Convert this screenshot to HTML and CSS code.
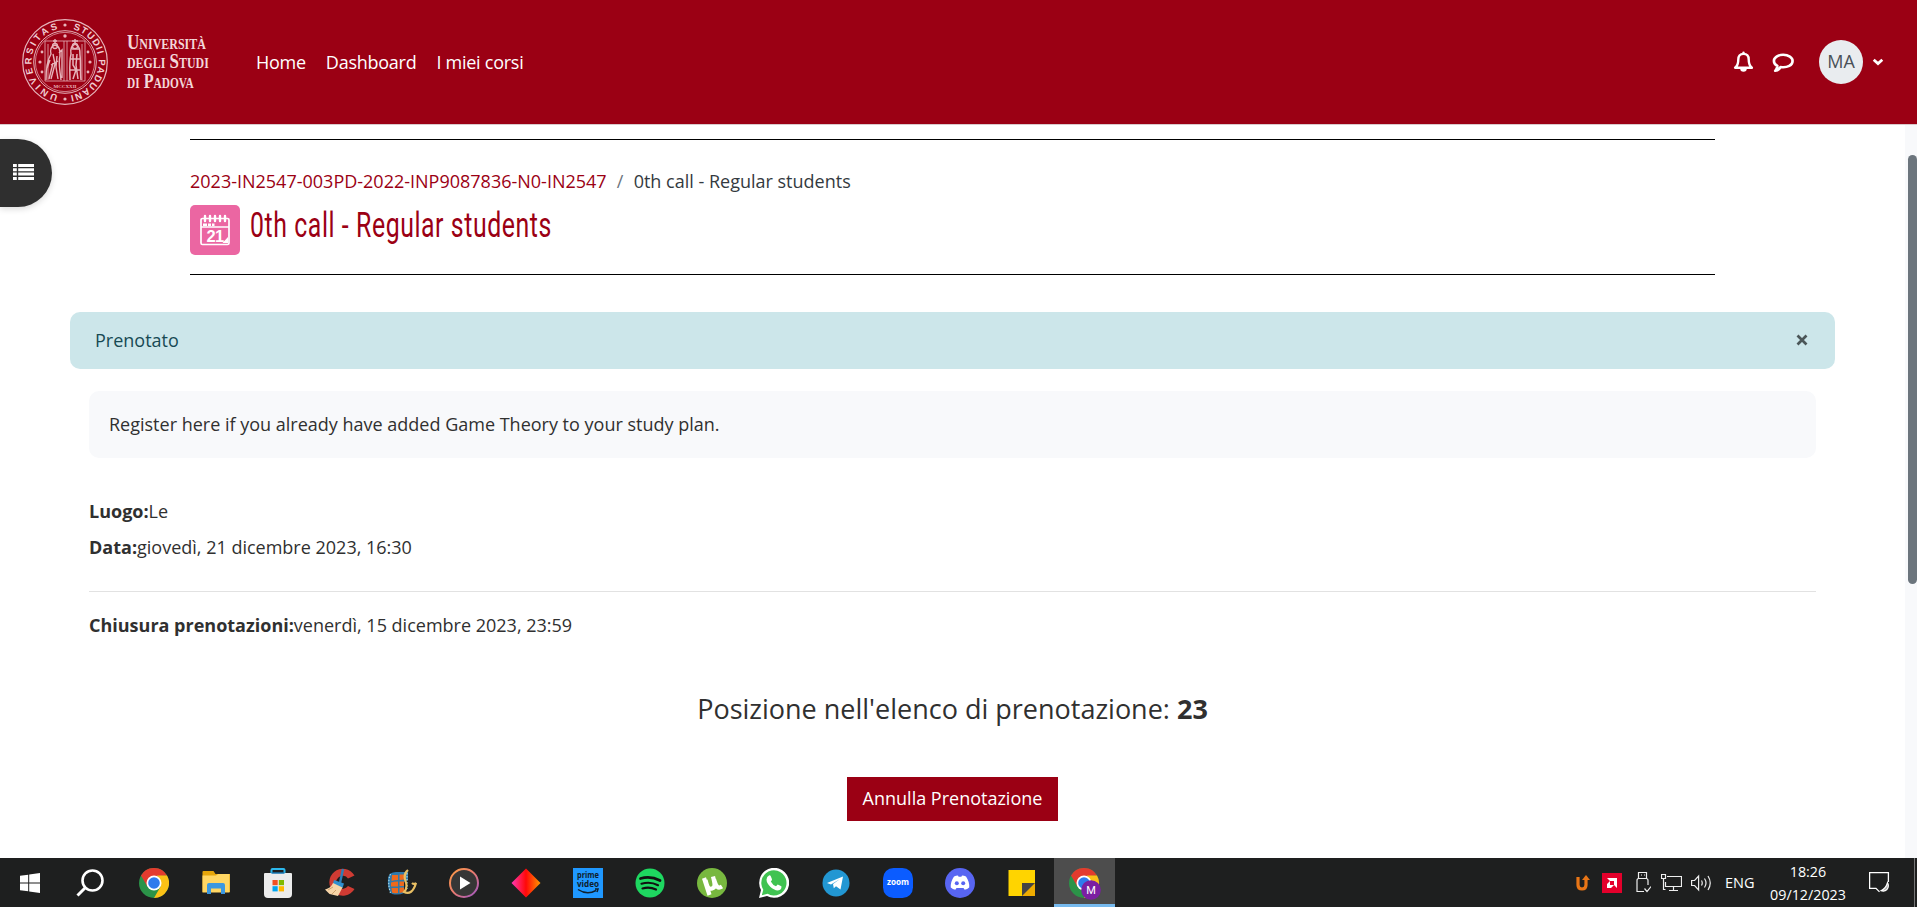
FILE: index.html
```html
<!DOCTYPE html>
<html lang="it">
<head>
<meta charset="utf-8">
<title>0th call - Regular students</title>
<link rel="stylesheet" href="styles.css">
</head>
<body>
<header class="topbar">
  <svg class="seal" width="88" height="88" viewBox="-44 -44 88 88">
    <defs><path id="ring" d="M0 33.6A33.6 33.6 0 1 1 .1 33.6"/></defs>
    <g fill="none" stroke="#e6b3ba">
      <circle r="42.3" stroke-width="1.2"/><circle r="31.3" stroke-width="1"/><circle r="29.6" stroke-width=".7"/>
      <path d="M-20 19V-21H20V19M-17 18V-18M17 18V-18M-20 19H20M-1 19V-21M2 19V-21" stroke-width=".8"/>
      <path d="M-10-23v5M-12-21h4M-10-17c-4 1-5 5-4 9-3 5-5 13-5 26M-10-17c5 1 5 6 5 11-2 7 0 14 1 24M-12-8l2 10-4 15M-8-6l-1 11 2 12M-15-2l-3 8M-12 1l-4 16M-6-9l3-3v28M-14 3l7-4" stroke-width="1.4"/>
      <path d="M10-23v5M7-21h6M10-18c-4 2-5 5-4 10-2 9-1 18-1 26M10-18c5 2 5 6 5 11 1 8 0 17 1 25M8-8v11l3 5-3 9M12-8l-1 11 2 14M7-13h7M6-3h9M5 8h10" stroke-width="1.5"/>
      <circle cx="-10" cy="-16" r="2.5" stroke-width="1.3"/><circle cx="10" cy="-16" r="2.6" stroke-width="1.3"/>
    </g>
    <g fill="#e6b3ba"><circle cy="-37" r="1.6"/><circle cy="37" r="1.6"/><circle cy="-26" r="1.7"/><circle cx="-25" r="1.6"/><circle cx="25" r="1.6"/><circle cx="-23" cy="-10" r="1.4"/><circle cx="23" cy="-10" r="1.4"/><circle cx="-23" cy="10" r="1.4"/><circle cx="23" cy="10" r="1.4"/></g>
    <text class="seal-year" x="0" y="25.5" text-anchor="middle">MCCXXII</text>
    <text class="seal-text"><textPath href="#ring" startOffset="7" textLength="91">UNIVERSITAS</textPath></text>
    <text class="seal-text"><textPath href="#ring" startOffset="113" textLength="92">STUDII PADUANI</textPath></text>
  </svg>
  <div class="wordmark"><span class="wm1">Università</span><span class="wm2">degli Studi</span><span class="wm3">di Padova</span></div>
  <nav class="nav"><a>Home</a><a>Dashboard</a><a>I miei corsi</a></nav>
  <div class="user">
    <svg class="bell" width="21" height="22" viewBox="0 0 21 22"><path d="M10.500 2.900c-3.700 0-5.200 2.700-5.200 5.600 0 4.300-1.200 6.700-3.200 8.300h16.800c-2-1.600-3.200-4-3.200-8.300 0-2.900-1.500-5.600-5.200-5.600z" fill="none" stroke="#fff" stroke-width="2.400" stroke-linejoin="round"/><path d="M9.300 3V1.600a1.200 1.200 0 0 1 2.400 0V3zM7.200 17.500h6.600a3.300 3.300 0 0 1-6.600 0z" fill="#fff"/></svg>
    <svg class="chat" width="22" height="20" viewBox="0 0 22 20"><path d="M11.200 1.800C6 1.800 1.900 4.400 1.900 7.900c0 2.200 1.400 3.900 3.500 5-.2 1.900-1 3.700-2.200 4.900 2.400-.2 4.200-1.700 5.400-3.800 7 1 12-2 12-6.100 0-3.500-4.200-6.100-9.400-6.100z" fill="none" stroke="#fff" stroke-width="2.600" stroke-linejoin="round"/></svg>
    <span class="avatar">MA</span>
    <svg class="chev" width="12" height="8" viewBox="0 0 12 8"><path d="M1.700 1.700 6 5.600l4.300-3.900" fill="none" stroke="#fff" stroke-width="2.700"/></svg>
  </div>
</header>
<div class="body">
  <aside class="left"><button class="drawer"><svg width="22" height="16" viewBox="0 0 22 16"><path d="M0 0h3.800v2.900H0zM5.200 0H21v2.900H5.200zM0 4.300h3.800v2.900H0zM5.200 4.300H21v2.900H5.200zM0 8.600h3.800v2.900H0zM5.200 8.600H21v2.900H5.200zM0 12.900h3.800V16H0zM5.200 12.900H21V16H5.200z" fill="#fff"/></svg></button></aside>
  <main class="main">
    <section class="head">
      <div class="crumbs"><a>2023-IN2547-003PD-2022-INP9087836-N0-IN2547</a><i>/</i><span>0th call - Regular students</span></div>
      <div class="titlerow">
        <span class="modicon"><svg width="30" height="32" viewBox="0 0 30 32"><path d="M2.500 4.500h25A1.500 1.500 0 0 1 29 6v23a1.500 1.500 0 0 1-1.500 1.500h-25A1.500 1.500 0 0 1 1 29V6a1.500 1.500 0 0 1 1.500-1.500z" fill="none" stroke="#fff" stroke-width="1.700"/><path d="M1 13h28" stroke="#fff" stroke-width="1.500"/><path d="M5 2v5M10 2v5M15 2v5M20 2v5M25 2v5" stroke="#fff" stroke-width="2.400" stroke-linecap="round"/><path d="M3 9.500h4V12H3zM8 9.500h3V12H8zM12 9.500h2.500V12H12zM22.500 29 28 23v6z" fill="#fff"/><text class="cal" x="15" y="27.500" text-anchor="middle">21</text></svg></span>
        <h1>0th call - Regular students</h1>
      </div>
    </section>
    <div class="alert"><span>Prenotato</span><svg width="12" height="12" viewBox="0 0 12 12"><path d="m1.500 1.500 9 9m0-9-9 9" stroke="#4b5658" stroke-width="2.700"/></svg></div>
    <section class="content">
      <div class="intro">Register here if you already have added Game Theory to your study plan.</div>
      <p class="line"><b>Luogo:</b>Le</p>
      <p class="line"><b>Data:</b>giovedì, 21 dicembre 2023, 16:30</p>
      <hr>
      <p class="line"><b>Chiusura prenotazioni:</b>venerdì, 15 dicembre 2023, 23:59</p>
      <p class="position">Posizione nell'elenco di prenotazione: <b>23</b></p>
      <button class="cancel">Annulla Prenotazione</button>
    </section>
  </main>
  <div class="scroll"><div class="thumb"></div></div>
</div>
<footer class="taskbar">
  <svg class="start" width="20" height="20" viewBox="0 0 20 20"><path d="M0 2.800 8.200 1.700v7.800H0zM9.200 1.500 20 0v9.500H9.200zM0 10.500h8.200v7.800L0 17.200zM9.200 10.500H20V20L9.200 18.500z" fill="#fff"/></svg>
  <svg class="find" width="28" height="28" viewBox="0 0 28 28"><circle cx="16.500" cy="11.500" r="10" fill="none" stroke="#fff" stroke-width="2.600"/><path d="m9.500 18.500-8 8" stroke="#fff" stroke-width="3"/></svg>
  <div class="apps">
    <span class="app"><svg width="30" height="30" viewBox="0 0 30 30"><circle cx="15" cy="15" r="15" fill="#2b9348"/><path d="M2 7.500A15 15 0 0 1 28 7.500L15 8.500 8.500 18.700z" fill="#e33b2e"/><path d="M28 7.500A15 15 0 0 1 15 30L21.500 18.700 18 7.500z" fill="#fbc116"/><circle cx="15" cy="15" r="7.500" fill="#fff"/><circle cx="15" cy="15" r="5.800" fill="#2f7bec"/></svg></span>
    <span class="app"><svg width="30" height="30" viewBox="0 0 30 30"><path d="M1.500 4q0-1 1-1h10l2 3H29v18H1.500z" fill="#e5a50a"/><path d="M1.500 7.500H15L17 6h11.500v18.500h-27z" fill="#ffd663"/><path d="M6 26V17q0-2 2-2h14q2 0 2 2v9h-4v-5.500H10V26z" fill="#3c98e0"/></svg></span>
    <span class="app"><svg width="30" height="30" viewBox="0 0 30 30"><path d="M8.500 7V2q0-1 1-1h11q1 0 1 1v5" fill="none" stroke="#2cb8ec" stroke-width="2"/><path d="M1 6q0-1 1-1h26q1 0 1 1v20q0 4-4 4H5q-4 0-4-4z" fill="#ececec"/><path d="M8.500 5h13" stroke="#1679b5" stroke-width="1.500"/><path d="M9.500 12h5.200v5.200H9.500z" fill="#f25022"/><path d="M15.800 12H21v5.200h-5.200z" fill="#7fba00"/><path d="M9.500 18.200h5.200v5.200H9.500z" fill="#00a4ef"/><path d="M15.800 18.200H21v5.200h-5.200z" fill="#ffb900"/></svg></span>
    <span class="app"><svg width="30" height="30" viewBox="0 0 30 30"><path d="M29.500 7.500A13.500 13.500 0 1 0 29.500 21L23 18a6.500 6.500 0 1 1 0-7.500z" fill="#cf3b33"/><path d="m18 1-3 14" stroke="#2c7fb8" stroke-width="2.400"/><path d="m9 12 10 3.500-1.500 4.500L8 15.500z" fill="#2f8fd0"/><path d="m8 15 9.500 4.500L13 28 4.500 26 0 21.500Q6 20 8 15z" fill="#f7d5a8"/><path d="m3 22 5-3m-1 7 4-4" stroke="#cda36e"/></svg></span>
    <span class="app"><svg width="30" height="30" viewBox="0 0 30 30"><path d="M1 10Q2 4 9 4h12v8l-4 2v11q-5 2.500-12 1-5-4-4-16z" fill="#2e79ab"/><path d="M5 7h6v5q-4 0-6.500 1zM12.500 6.500H18v5q-3 0-5.500.5zM4 14.500q3-1 7-1v5H4zM12.500 13.500H17V18h-4.500zM4.500 20H11v5q-4 .5-6-.5zM12.500 19.500H17V24l-4.500 1z" fill="#ee691c"/><path d="M3.500 6Q0 14 3.500 25M20 5v16" fill="none" stroke="#a7d8e8" stroke-width="1.200" stroke-dasharray="1.500 1.500"/><path d="M21 2q-5 4-2.500 11T17 24q8 4 12-9-2 2-4 0" fill="none" stroke="#e8bf64" stroke-width="2.200"/></svg></span>
    <span class="app"><svg width="30" height="30" viewBox="0 0 30 30"><defs><linearGradient id="mp" x1="0" y1="0" x2="1" y2="1"><stop stop-color="#ff9d43"/><stop offset=".5" stop-color="#e77972"/><stop offset="1" stop-color="#9a55c9"/></linearGradient></defs><circle cx="15" cy="15" r="14" fill="#363636" stroke="url(#mp)" stroke-width="2"/><path d="m11 8.500 10.500 6.500L11 21.500z" fill="#fff"/></svg></span>
    <span class="app"><svg width="30" height="30" viewBox="0 0 30 30"><defs><linearGradient id="dm"><stop stop-color="#ff38b5"/><stop offset=".5" stop-color="#ff0808"/><stop offset="1" stop-color="#ff9800"/></linearGradient></defs><path d="M15 .5 29.500 15 15 29.500.5 15z" fill="url(#dm)"/></svg></span>
    <span class="app"><svg width="30" height="30" viewBox="0 0 30 30"><path d="M0 0h30v30H0z" fill="#1f98ff"/><text class="prime" x="15" y="10" text-anchor="middle" textLength="22" lengthAdjust="spacingAndGlyphs">prime</text><text class="prime" x="15" y="18.500" text-anchor="middle" textLength="22" lengthAdjust="spacingAndGlyphs">video</text><path d="M5 21.500q9 6 18 1M22 21h3l-1 3" fill="none" stroke="#10202c" stroke-width="1.500"/></svg></span>
    <span class="app"><svg width="30" height="30" viewBox="0 0 30 30"><circle cx="15" cy="15" r="14.500" fill="#1ed760"/><path d="M5.500 10.500q10-3 19.500 2" stroke-width="2.800" fill="none" stroke="#111" stroke-linecap="round"/><path d="M6.500 15.700q9-2.500 16.500 1.500M7.500 20.500q7-2 13.500 1" stroke-width="2.200" fill="none" stroke="#111" stroke-linecap="round"/></svg></span>
    <span class="app"><svg width="30" height="30" viewBox="0 0 30 30"><circle cx="15" cy="15" r="15" fill="#78b83f"/><path d="m7 10 5.500 17M8.500 12c2 8 3 9.500 6.500 8.500s3-4 1-12m1 3c2.500 8 4 9.500 8 7" fill="none" stroke="#fff" stroke-width="4.200"/></svg></span>
    <span class="app"><svg width="30" height="30" viewBox="0 0 30 30"><path d="m0 30 2-8A15 15 0 1 1 8 28z" fill="#fff"/><path d="m2.800 27.300 1.500-5.600a12.600 12.600 0 1 1 4.300 4.100z" fill="#40c351"/><path d="M10 7.500q1.200-.5 1.800.7l1.200 3q.3.700-1.200 2.200 2 3.700 5.200 4.800l1.700-1.800 3.700 1.800q.5 3.800-3.600 4.300c-5-.3-11.300-6-11.300-11q.3-3.200 2.500-4z" fill="#fff"/></svg></span>
    <span class="app"><svg width="30" height="30" viewBox="0 0 30 30"><circle cx="15" cy="15" r="13.500" fill="#2297d3"/><path d="m6 15 16-6.500-2.500 13-4.500-3.300-2.200 2.100-.8-4.200 7-5-9 5.500z" fill="#fff"/></svg></span>
    <span class="app"><svg width="30" height="30" viewBox="0 0 30 30"><rect width="30" height="30" rx="10.500" fill="#0b5cff"/><text class="zoomtext" x="15" y="17.300" text-anchor="middle" textLength="22" lengthAdjust="spacingAndGlyphs">zoom</text></svg></span>
    <span class="app"><svg width="30" height="30" viewBox="0 0 30 30"><circle cx="15" cy="15" r="15" fill="#5865f2"/><path d="M9 8.500q2-1 4-1l.6 1.300h2.800L17 7.500q2 0 4 1 3.700 5.500 3.200 11-2 1.700-4.500 2.200L18.500 20h-7l-1.200 1.700q-2.500-.5-4.500-2.200Q5.300 14 9 8.500z" fill="#fff"/><circle cx="11.800" cy="15.300" r="2" fill="#5865f2"/><circle cx="18.200" cy="15.300" r="2" fill="#5865f2"/></svg></span>
    <span class="app"><svg width="30" height="30" viewBox="0 0 30 30"><path d="M1.500 2H28v26H1.500z" fill="#ffd400"/><path d="M15 15h13v13H15z" fill="#eeac00"/><path d="M15 15h13L15 28z" fill="#444"/></svg></span>
    <span class="app active"><svg width="34" height="32" viewBox="-1 0 34 32"><circle cx="15" cy="15" r="15" fill="#2b9348"/><path d="M2 7.500A15 15 0 0 1 28 7.500L15 8.500 8.500 18.700z" fill="#e33b2e"/><path d="M28 7.500A15 15 0 0 1 15 30L21.500 18.700 18 7.500z" fill="#fbc116"/><circle cx="15" cy="15" r="7.500" fill="#fff"/><circle cx="15" cy="15" r="5.800" fill="#2f7bec"/><circle cx="22" cy="22" r="9.800" fill="#7b1fa2"/><text class="profile" x="22" y="26" text-anchor="middle">M</text></svg></span>
  </div>
  <div class="tray">
    <svg class="t1" width="14" height="16" viewBox="0 0 14 16"><path d="M2 2v8q0 4 4 4t4-4V3" fill="none" stroke="#e87516" stroke-width="3.200"/><path d="m6 5 4-5 4 5z" fill="#e87516"/></svg>
    <svg class="t2" width="20" height="20" viewBox="0 0 20 20"><path d="M0 0h20v20H0z" fill="#e4002b"/><path d="M5 5h10v10l-3-3V8H8zM5 15v-4l3-3v4h4l-3 3z" fill="#fff"/></svg>
    <svg class="t3" width="15" height="21" viewBox="0 0 15 21"><path d="M2.500 6.500v-6h8v6M1 20V8.500q0-2 2-2h7q2 0 2 2V13M1 19.500h7M8.500 16.500l2.500 3 4-5M5 3h1m2 0h1" fill="none" stroke="#eee" stroke-width="1.200"/></svg>
    <svg class="t4" width="21" height="18" viewBox="0 0 21 18"><path d="M6 2.500h14.500v10H4.500V8M12.500 12.500v4M8 16.500h9M.5.500h4v4H.5zM2.500 4.500v11h2" fill="none" stroke="#eee" stroke-width="1.200"/></svg>
    <svg class="t5" width="21" height="18" viewBox="0 0 21 18"><path d="M.6 6.500h3l4-4.500v14l-4-4.500h-3zM10.500 6.500q1.500 2.500 0 5M13.500 4.500q3 4.500 0 9M17 2q4.500 7 0 14" fill="none" stroke="#eee" stroke-width="1.200"/></svg>
    <span class="lang">ENG</span>
    <span class="clock"><span>18:26</span><span>09/12/2023</span></span>
    <svg class="t6" width="21" height="21" viewBox="0 0 21 21"><path d="M19.400 10V.6H.6v15.800H7l3.500 3.500" fill="none" stroke="#fff" stroke-width="1.300"/><path d="M18.500 10.500q2 4-.5 7-2.500 2.500-6 1.200 5-2.200 6.500-8.200z" fill="#aaa" stroke="#fff" stroke-width="1.100"/></svg>
  </div>
</footer>
</body>
</html>
```
FILE: styles.css
```css
* { box-sizing: border-box; }
body { margin: 0; width: 1917px; height: 907px; overflow: hidden; background: #fff; color: #303030; font: 385 18px/27px "Open Sans", "Noto Sans", sans-serif; display: flex; flex-direction: column; }
svg { display: block; flex: none; }
p, h1 { margin: 0; font-weight: inherit; }
button { border: 0; padding: 0; font: inherit; }
b { font-weight: 690; }

.topbar { height: 125px; flex: none; background: #9b0014; border-bottom: 1px solid #d9c9cb; display: flex; align-items: center; color: #fff; }
.seal { margin-left: 21px; margin-top: -1px; }
.seal-text { font: 700 9.5px "Liberation Sans", sans-serif; fill: #f0ccd1; }
.seal-year { font: 700 5px "Liberation Serif", serif; fill: #e6b3ba; }
.wordmark { width: 129px; margin-left: 18px; margin-right: -1px; display: flex; flex-direction: column; font: 700 20px/19.600px "Liberation Serif", serif; font-variant: small-caps; color: #f3d7da; white-space: nowrap; }
.wordmark span { transform-origin: left; width: max-content; }
.wm1 { transform: scaleX(.855); }
.wm2 { transform: scaleX(.85); }
.wm3 { transform: scaleX(.81); }
.nav { display: flex; gap: 20px; margin-left: 1px; font-weight: 400; letter-spacing: -.26px; }
.user { margin-left: auto; margin-right: 33px; display: flex; align-items: center; }
.bell { margin-top: -1px; }
.chat { margin: 2px 25px 0 18px; }
.avatar { width: 44px; height: 44px; margin-top: -1px; border-radius: 50%; background: #e9ecef; color: #495057; display: flex; align-items: center; justify-content: center; }
.chev { margin-left: 9px; }

.body { height: 733px; flex: none; display: flex; }
.left { width: 70px; flex: none; padding-top: 14px; }
.drawer { width: 52px; height: 68px; border-radius: 0 34px 34px 0; background: #2f2f2f; padding: 0 0 2px 13px; box-shadow: 0 2px 6px rgba(0,0,0,.15); display: flex; align-items: center; }
.main { width: 1765px; display: flex; flex-direction: column; }
.head { margin: 14px 120px 0; height: 136px; border-top: 1px solid #000; border-bottom: 1px solid #000; padding-top: 28px; }
.crumbs { display: flex; color: #343a40; }
.crumbs a { color: #9b0014; }
.crumbs i { width: 27px; text-align: center; font-style: normal; color: #6c757d; }
.titlerow { display: flex; margin-top: 10px; }
.modicon { width: 50px; height: 50px; border-radius: 5px; background: #eb66a2; display: flex; align-items: center; justify-content: center; }
.cal { font: 700 16.500px "Liberation Sans", sans-serif; fill: #fff; letter-spacing: -.8px; }
h1 { margin-left: 10px; color: #9b0014; font: 400 35px/41px Roboto, sans-serif; letter-spacing: .8px; white-space: nowrap; transform: scaleX(.71); transform-origin: left; width: max-content; }
.alert { margin-top: 37px; height: 57px; border-radius: 10px; background: #cce6ea; color: #174a54; padding: 0 27px 0 25px; display: flex; align-items: center; justify-content: space-between; }
.alert svg { margin-top: -2px; }
.content { margin: 22px 19px 0; display: flex; flex-direction: column; }
.intro { height: 67px; border-radius: 10px; background: #f8f9fb; padding: 20px; margin-bottom: 40px; }
.line { height: 36px; line-height: 27px; }
hr { width: 100%; height: 1px; border: 0; background: #e2e2e2; margin: 21px 0 20px; }
.position { margin-top: 41px; text-align: center; font-size: 27px; line-height: 40px; }
.cancel { width: 211px; height: 44px; margin: 48px auto 0; background: #9b0014; color: #fff; font-weight: 400; padding-bottom: 2px; }
.scroll { margin-left: auto; width: 12px; padding: 30px 0 0 3px; background: #f8f9fb; }
.thumb { height: 429px; border-radius: 5px; background: #6c757d; }

.taskbar { height: 49px; flex: none; background: #1e1f1f; display: flex; align-items: center; color: #fff; }
.start { margin-left: 20px; }
.find { margin-left: 36px; }
.apps { display: flex; height: 49px; margin-left: 19px; }
.app { width: 62px; display: flex; align-items: center; justify-content: center; }
.app.active { width: 61px; margin-left: 1px; background: #4d4d4d; border-bottom: 3px solid #76b9ed; padding-top: 5px; }
.prime { font: 700 9px "Open Sans", sans-serif; fill: #10202c; }
.zoomtext { font: 700 8px "Open Sans", sans-serif; fill: #fff; }
.profile { font: 400 11px Roboto, sans-serif; fill: #fff; }
.tray { margin-left: auto; height: 49px; display: flex; align-items: center; border-right: 1px solid #777; margin-right: 2px; font: 400 15px/23px "Open Sans", sans-serif; }
.t2 { margin-left: 12px; }
.t3 { margin-left: 14px; }
.t4 { margin-left: 10px; }
.t5 { margin-left: 9px; }
.lang { width: 30px; margin-left: 13px; font-size: 14.500px; }
.clock { width: 80px; margin-left: 13px; display: flex; flex-direction: column; align-items: center; font-size: 14.300px; }
.t6 { margin: 0 24px 0 21px; }
```
